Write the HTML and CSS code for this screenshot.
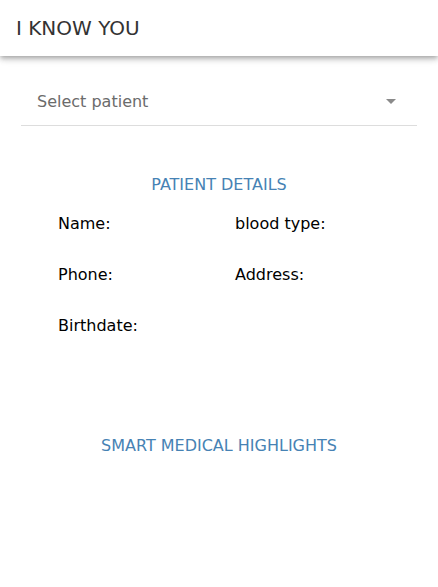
FILE: index.html
```html
<!DOCTYPE html>
<html>
<head>
<meta charset="utf-8">
<link rel="stylesheet" href="styles.css">
</head>
<body>
<header class="appbar">I KNOW YOU</header>
<main class="content">
  <div class="select">
    <span class="select-text">Select patient</span>
    <svg class="select-arrow" width="10" height="5" viewBox="0 0 10 5"><path d="M0 0L5 5L10 0Z" fill="currentColor"/></svg>
  </div>
  <h2 class="section-title details-title">PATIENT DETAILS</h2>
  <div class="details">
    <div class="field">Name:</div>
    <div class="field">blood type:</div>
    <div class="field">Phone:</div>
    <div class="field">Address:</div>
    <div class="field">Birthdate:</div>
  </div>
  <h2 class="section-title highlights-title">SMART MEDICAL HIGHLIGHTS</h2>
</main>
</body>
</html>
```
FILE: styles.css
```css
html, body {
  margin: 0;
  padding: 0;
  background: #fff;
  font-family: "DejaVu Sans", sans-serif;
}
.appbar {
  height: 56px;
  box-sizing: border-box;
  padding-left: 16px;
  display: flex;
  align-items: center;
  font-size: 20px;
  color: #333;
  background: #fff;
  box-shadow: 0 2px 4px -1px rgba(0,0,0,0.2), 0 4px 5px 0 rgba(0,0,0,0.14), 0 1px 10px 0 rgba(0,0,0,0.12);
}
.content {
  padding: 0 21px;
}
.select {
  margin-top: 26px;
  height: 44px;
  box-sizing: border-box;
  border-bottom: 1px solid #ddd;
  display: flex;
  align-items: center;
  justify-content: space-between;
  padding: 0 21px 4px 16px;
}
.select-text {
  font-size: 16px;
  color: #6b6b6b;
}
.select-arrow {
  color: #8a8a8a;
}
.section-title {
  margin: 0;
  font-size: 16px;
  font-weight: normal;
  text-align: center;
  color: #4682b4;
  line-height: 20px;
}
.details-title {
  margin-top: 49px;
}
.details {
  display: grid;
  grid-template-columns: 177px 1fr;
  row-gap: 31px;
  padding-left: 37px;
  margin-top: 19px;
}
.field {
  font-size: 16px;
  line-height: 20px;
  color: #000;
}
.highlights-title {
  margin-top: 100px;
}
```
